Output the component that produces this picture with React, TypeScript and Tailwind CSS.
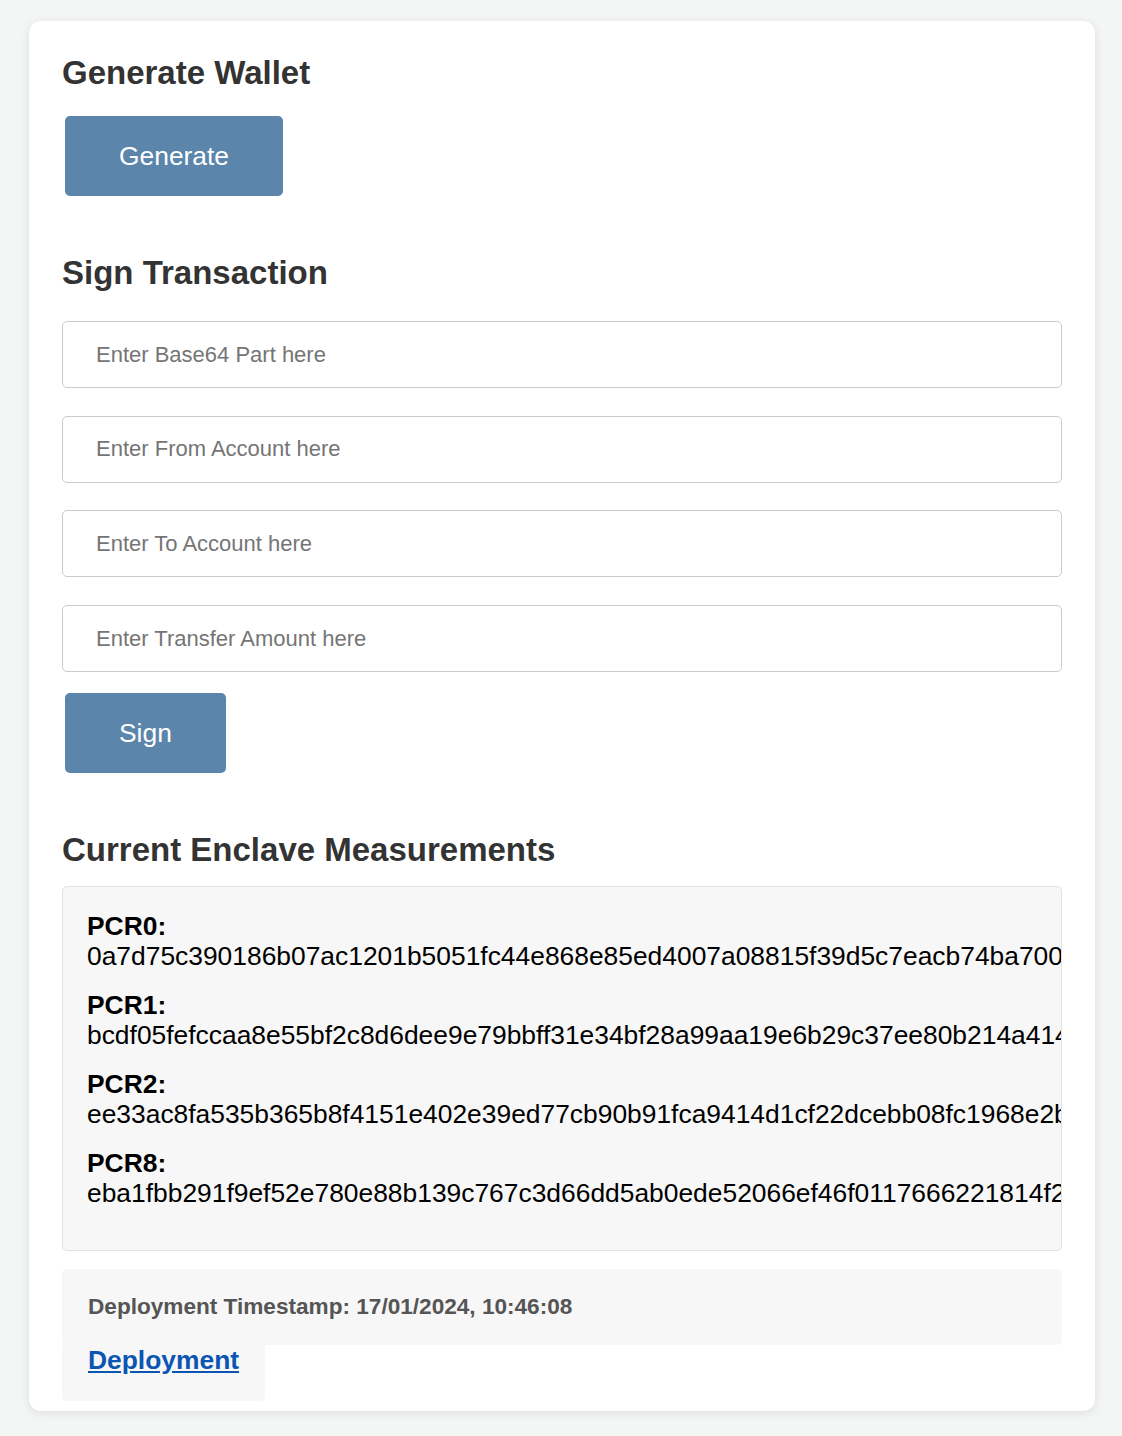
const font = "'Liberation Sans', Arial, Helvetica, sans-serif";

const measurements = [
  {
    label: "PCR0",
    value: "0a7d75c390186b07ac1201b5051fc44e868e85ed4007a08815f39d5c7eacb74ba700c9e5b1a3f27d4e60a8b2c91f5d34",
  },
  {
    label: "PCR1",
    value: "bcdf05fefccaa8e55bf2c8d6dee9e79bbff31e34bf28a99aa19e6b29c37ee80b214a414b7607236edf26fcb78654e63f",
  },
  {
    label: "PCR2",
    value: "ee33ac8fa535b365b8f4151e402e39ed77cb90b91fca9414d1cf22dcebb08fc1968e2b3a5c7d90e4f16a28b3c54d7e9a",
  },
  {
    label: "PCR8",
    value: "eba1fbb291f9ef52e780e88b139c767c3d66dd5ab0ede52066ef46f0117666221814f2d6c4a8e03b57f19c28d4e6a1b3",
  },
];

const inputs = [
  "Enter Base64 Part here",
  "Enter From Account here",
  "Enter To Account here",
  "Enter Transfer Amount here",
];

function ActionButton({ children }: { children: string }) {
  return (
    <button
      type="button"
      className="ml-[3px] flex h-[80px] items-center justify-center rounded-[5px] bg-[#5b85ab] px-[54px] text-[26.4px] leading-[30px] text-white"
    >
      {children}
    </button>
  );
}

function Heading({ children, className = "" }: { children: string; className?: string }) {
  return <h2 className={`text-[33px] font-bold leading-[38px] text-[#333] ${className}`}>{children}</h2>;
}

export default function App() {
  return (
    <div className="min-h-screen bg-[#f4f5f5] pl-[29px] pr-[27px] pt-[21px]" style={{ fontFamily: font }}>
      <div className="rounded-[12px] bg-white px-[33px] pb-[10px] pt-[33px] shadow-[0_2px_10px_rgba(0,0,0,0.1)]">
        <Heading>Generate Wallet</Heading>
        <div className="mt-[24px]">
          <ActionButton>Generate</ActionButton>
        </div>

        <Heading className="mt-[58px]">Sign Transaction</Heading>
        <div className="mt-[29px] flex flex-col gap-[27.7px]">
          {inputs.map((placeholder) => (
            <input
              key={placeholder}
              type="text"
              placeholder={placeholder}
              className="h-[67px] w-full rounded-[5px] border border-[#cccccc] bg-white px-[33px] text-[22px] text-[#333] outline-none placeholder:text-[#757575]"
            />
          ))}
        </div>
        <div className="mt-[21px]">
          <ActionButton>Sign</ActionButton>
        </div>

        <Heading className="mt-[58px]">Current Enclave Measurements</Heading>
        <div className="mt-[17px] overflow-hidden rounded-[5px] border border-[#e2e2e2] bg-[#f7f7f7] p-[24px] text-[26.4px] leading-[30.4px] text-black">
          {measurements.map((m) => (
            <p key={m.label} className="mb-[18px] whitespace-nowrap">
              <strong>{m.label}:</strong>
              <br />
              {m.value}
            </p>
          ))}
        </div>

        <div className="mt-[18px] rounded-[5px] bg-[#f7f7f7] px-[26px] py-[25px] text-[22.6px] font-bold leading-[26px] text-[#555]">
          Deployment Timestamp: 17/01/2024, 10:46:08
        </div>
        <div className="w-fit rounded-b-[5px] bg-[#f7f7f7] px-[26px] pb-[24.6px]">
          <a href="#" className="text-[26.4px] font-bold leading-[30.4px] text-[#0b55b3] underline">
            Deployment
          </a>
        </div>
      </div>
    </div>
  );
}
